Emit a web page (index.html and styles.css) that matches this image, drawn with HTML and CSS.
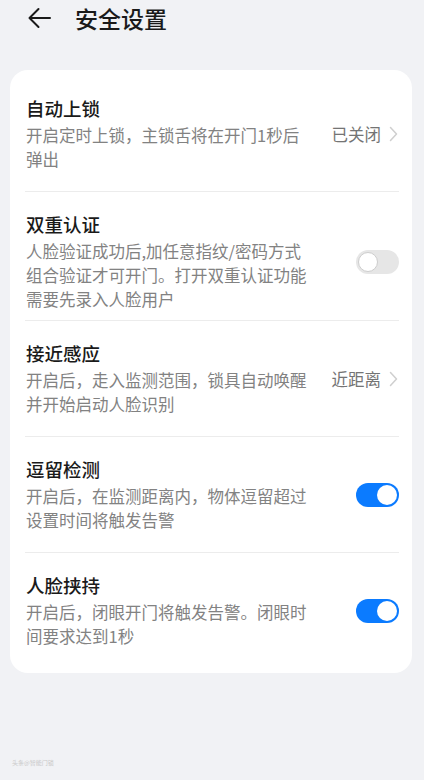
FILE: index.html
```html
<!DOCTYPE html>
<html lang="zh-CN">
<head>
<meta charset="utf-8">
<title>安全设置</title>
<link rel="stylesheet" href="styles.css">
</head>
<body>
<header class="topbar">
  <svg class="back" width="24" height="22" viewBox="0 0 24 22" aria-hidden="true">
    <path d="M23 11H2.5M11.5 2L2.5 11l9 9" fill="none" stroke="#1a1a1a" stroke-width="2" stroke-linecap="round" stroke-linejoin="round"/>
  </svg>
  <h1 class="title">安全设置</h1>
</header>

<main class="card">
  <div class="row">
    <div class="text">
      <div class="name">自动上锁</div>
      <div class="desc">开启定时上锁，主锁舌将在开门1秒后弹出</div>
    </div>
    <div class="control">
      <span class="value">已关闭</span>
      <svg class="chev" width="9" height="16" viewBox="0 0 9 16" aria-hidden="true"><path d="M1.5 1.5L7.5 8l-6 6.5" fill="none" stroke="#cfcfcf" stroke-width="1.5" stroke-linecap="round" stroke-linejoin="round"/></svg>
    </div>
  </div>

  <div class="row row-tight">
    <div class="text">
      <div class="name">双重认证</div>
      <div class="desc">人脸验证成功后,加任意指纹/密码方式组合验证才可开门。打开双重认证功能需要先录入人脸用户</div>
    </div>
    <div class="control">
      <span class="toggle"><span class="knob"></span></span>
    </div>
  </div>

  <div class="row">
    <div class="text">
      <div class="name">接近感应</div>
      <div class="desc">开启后，走入监测范围，锁具自动唤醒并开始启动人脸识别</div>
    </div>
    <div class="control">
      <span class="value">近距离</span>
      <svg class="chev" width="9" height="16" viewBox="0 0 9 16" aria-hidden="true"><path d="M1.5 1.5L7.5 8l-6 6.5" fill="none" stroke="#cfcfcf" stroke-width="1.5" stroke-linecap="round" stroke-linejoin="round"/></svg>
    </div>
  </div>

  <div class="row">
    <div class="text">
      <div class="name">逗留检测</div>
      <div class="desc">开启后，在监测距离内，物体逗留超过设置时间将触发告警</div>
    </div>
    <div class="control">
      <span class="toggle on"><span class="knob"></span></span>
    </div>
  </div>

  <div class="row">
    <div class="text">
      <div class="name">人脸挟持</div>
      <div class="desc">开启后，闭眼开门将触发告警。闭眼时间要求达到1秒</div>
    </div>
    <div class="control">
      <span class="toggle on"><span class="knob"></span></span>
    </div>
  </div>
</main>

<footer class="mark">头条@智能门锁</footer>
</body>
</html>
```

FILE: styles.css
```css
* { box-sizing: border-box; }

html, body {
  margin: 0;
  padding: 0;
  background: #f1f2f5;
}

body {
  width: 424px;
  height: 780px;
  overflow: hidden;
  font-family: "Noto Sans CJK SC", "Noto Sans", sans-serif;
  color: #1a1a1a;
}

.topbar {
  height: 36px;
  display: flex;
  align-items: center;
  padding-left: 27px;
  gap: 24px;
}

.back { display: block; flex: none; }

.title {
  margin: 0;
  font-size: 23px;
  font-weight: 500;
  line-height: 36px;
  color: #1a1a1a;
}

.card {
  margin: 34px 12px 0 10px;
  padding: 5px 0;
  background: #ffffff;
  border-radius: 18px;
}

.row {
  display: flex;
  align-items: center;
  margin: 0 13px 0 15px;
  padding: 21px 0 20px 1px;
}

.row + .row {
  border-top: 1px solid #ececec;
  padding-top: 20px;
}

.row-tight { padding-bottom: 9px; }

.text { width: 286px; flex: none; }

.name {
  font-size: 18.5px;
  font-weight: 500;
  line-height: 24px;
  color: #1a1a1a;
}

.desc {
  margin-top: 3px;
  font-size: 16.5px;
  line-height: 24px;
  color: #828282;
}

.control {
  margin-left: auto;
  display: flex;
  align-items: center;
  gap: 8px;
}

.value {
  font-size: 16.5px;
  line-height: 24px;
  color: #747474;
}

.chev { display: block; margin-right: 1px; }

.toggle {
  width: 43px;
  height: 24px;
  border-radius: 12px;
  background: #e6e6e6;
  display: flex;
  align-items: center;
  justify-content: flex-start;
  padding: 0 2px;
}

.toggle .knob {
  width: 20px;
  height: 20px;
  border-radius: 50%;
  background: #ffffff;
  border: 1.5px solid #cdcdcd;
}

.toggle.on {
  background: #0b7bff;
  justify-content: flex-end;
}

.toggle.on .knob { border: none; }

.mark {
  margin-top: 86px;
  padding-left: 12px;
  font-size: 6px;
  line-height: 8px;
  color: #c9c9c9;
}
```
